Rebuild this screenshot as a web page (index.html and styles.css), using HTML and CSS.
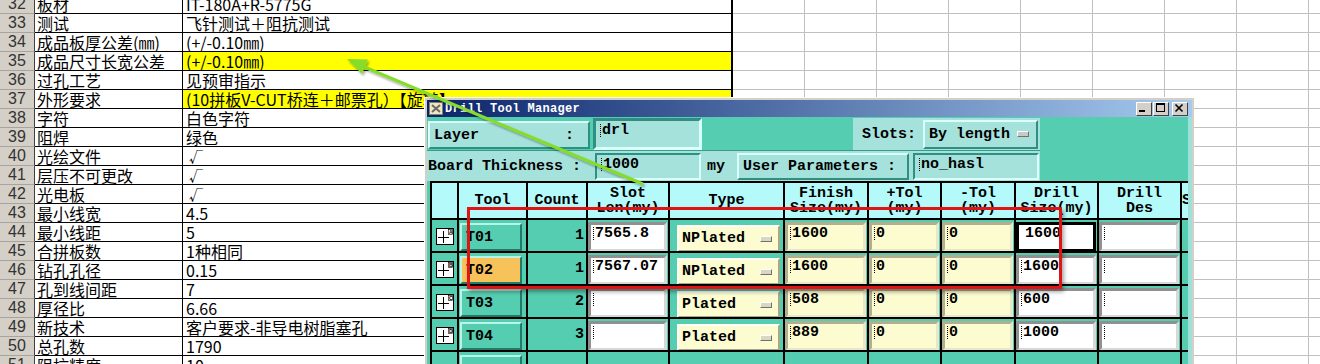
FILE: index.html
```html
<!DOCTYPE html>
<html lang="zh">
<head>
    <meta charset="UTF-8">
    <title>Drill Tool Manager</title>
    <link rel="stylesheet" href="styles.css">
</head>
<body>
    <div class="sheet">
        <div class="row"><div class="rh">32</div><div class="cb">板材</div><div class="cc">IT-180A+R-5775G</div><div class="gx"></div></div>
        <div class="row"><div class="rh">33</div><div class="cb">测试</div><div class="cc">飞针测试＋阻抗测试</div><div class="gx"></div></div>
        <div class="row"><div class="rh">34</div><div class="cb">成品板厚公差(㎜)</div><div class="cc">(+/-0.10㎜)</div><div class="gx"></div></div>
        <div class="row"><div class="rh">35</div><div class="cb">成品尺寸长宽公差</div><div class="cc hl">(+/-0.10㎜)</div><div class="gx"></div></div>
        <div class="row"><div class="rh">36</div><div class="cb">过孔工艺</div><div class="cc">见预审指示</div><div class="gx"></div></div>
        <div class="row"><div class="rh">37</div><div class="cb">外形要求</div><div class="cc hl">(10拼板V-CUT桥连＋邮票孔）【旋转】</div><div class="gx"></div></div>
        <div class="row"><div class="rh">38</div><div class="cb">字符</div><div class="cc">白色字符</div><div class="gx"></div></div>
        <div class="row"><div class="rh">39</div><div class="cb">阻焊</div><div class="cc">绿色</div><div class="gx"></div></div>
        <div class="row"><div class="rh">40</div><div class="cb">光绘文件</div><div class="cc chk">√</div><div class="gx"></div></div>
        <div class="row"><div class="rh">41</div><div class="cb">层压不可更改</div><div class="cc chk">√</div><div class="gx"></div></div>
        <div class="row"><div class="rh">42</div><div class="cb">光电板</div><div class="cc chk">√</div><div class="gx"></div></div>
        <div class="row"><div class="rh">43</div><div class="cb">最小线宽</div><div class="cc">4.5</div><div class="gx"></div></div>
        <div class="row"><div class="rh">44</div><div class="cb">最小线距</div><div class="cc">5</div><div class="gx"></div></div>
        <div class="row"><div class="rh">45</div><div class="cb">合拼板数</div><div class="cc">1种相同</div><div class="gx"></div></div>
        <div class="row"><div class="rh">46</div><div class="cb">钻孔孔径</div><div class="cc">0.15</div><div class="gx"></div></div>
        <div class="row"><div class="rh">47</div><div class="cb">孔到线间距</div><div class="cc">7</div><div class="gx"></div></div>
        <div class="row"><div class="rh">48</div><div class="cb">厚径比</div><div class="cc">6.66</div><div class="gx"></div></div>
        <div class="row"><div class="rh">49</div><div class="cb">新技术</div><div class="cc">客户要求-非导电树脂塞孔</div><div class="gx"></div></div>
        <div class="row"><div class="rh">50</div><div class="cb">总孔数</div><div class="cc">1790</div><div class="gx"></div></div>
        <div class="row"><div class="rh">51</div><div class="cb">阻抗精度</div><div class="cc">10</div><div class="gx"></div></div>
    </div>

    <div class="dlg">
        <div class="titlebar">
            <svg class="ticon" width="14" height="13" viewBox="0 0 14 13">
                <rect x="0.5" y="0.5" width="13" height="12" fill="#f0e8b8" stroke="#808080"/>
                <path d="M3 3L11 10M11 3L3 10" stroke="#6a6a6a" stroke-width="2"/>
            </svg>
            <span class="ttext">Drill Tool Manager</span>
            <div class="wbtns">
                <span class="wb"><svg width="14" height="12" viewBox="0 0 14 12"><rect x="3" y="8" width="6" height="2" fill="#000"/></svg></span>
                <span class="wb"><svg width="14" height="12" viewBox="0 0 14 12"><rect x="3.5" y="1.5" width="8" height="8" fill="none" stroke="#000"/><rect x="3" y="1" width="9" height="2" fill="#000"/></svg></span>
                <span class="wb wx"><svg width="14" height="12" viewBox="0 0 14 12"><path d="M3.5 2.5L10.5 9.5M10.5 2.5L3.5 9.5" stroke="#000" stroke-width="1.6"/></svg></span>
            </div>
        </div>
        <div class="dlg-body">
            <div class="r1">
                <div class="btn layer"><span>Layer</span><span>:</span></div>
                <div class="field drl"><span class="ib"></span>drl</div>
                <div class="slots">
                    <span class="slbl">Slots:</span>
                    <div class="btn opt">By length <i class="ind"></i></div>
                </div>
            </div>
            <div class="r2">
                <span class="blbl">Board Thickness :</span>
                <div class="field thick"><span class="ib"></span>1000</div>
                <span class="unit">my</span>
                <div class="btn upar">User Parameters :</div>
                <div class="field nohasl"><span class="ib"></span>no_hasl</div>
            </div>

            <div class="tbl">
                <div class="th"></div>
                <div class="th">Tool</div>
                <div class="th">Count</div>
                <div class="th">Slot<br>Len(my)</div>
                <div class="th">Type</div>
                <div class="th">Finish<br>Size(my)</div>
                <div class="th">+Tol<br>(my)</div>
                <div class="th">-Tol<br>(my)</div>
                <div class="th">Drill<br>Size(my)</div>
                <div class="th">Drill<br>Des</div>
                <div class="th th-s">S</div>

                <div class="td ic"><svg width="18" height="17" viewBox="0 0 18 17"><rect x="0.5" y="0.5" width="17" height="16" fill="#fff" stroke="#000"/><path d="M2 9.5H13M7.5 3V15" stroke="#000"/><rect x="12.5" y="1.5" width="4" height="5" fill="#fff" stroke="#000" stroke-width="0.6"/><text x="13" y="6" font-size="5" font-family="Liberation Sans">A</text></svg></div>
                <div class="td"><div class="btn tool">T01</div></div>
                <div class="td cnt">1</div>
                <div class="td"><div class="inp wht"><span class="ib"></span>7565.8</div></div>
                <div class="td"><div class="btn ytype">NPlated <i class="ind"></i></div></div>
                <div class="td"><div class="inp ylw"><span class="ib"></span>1600</div></div>
                <div class="td"><div class="inp ylw"><span class="ib"></span>0</div></div>
                <div class="td"><div class="inp ylw"><span class="ib"></span>0</div></div>
                <div class="td"><div class="inp wht focus">1600</div></div>
                <div class="td"><div class="inp wht"><span class="ib"></span></div></div>
                <div class="td"></div>

                <div class="td ic"><svg width="18" height="17" viewBox="0 0 18 17"><rect x="0.5" y="0.5" width="17" height="16" fill="#fff" stroke="#000"/><path d="M2 9.5H13M7.5 3V15" stroke="#000"/><rect x="12.5" y="1.5" width="4" height="5" fill="#fff" stroke="#000" stroke-width="0.6"/><text x="13" y="6" font-size="5" font-family="Liberation Sans">B</text></svg></div>
                <div class="td"><div class="btn tool sel">T02</div></div>
                <div class="td cnt">1</div>
                <div class="td"><div class="inp wht"><span class="ib"></span>7567.07</div></div>
                <div class="td"><div class="btn ytype">NPlated <i class="ind"></i></div></div>
                <div class="td"><div class="inp ylw"><span class="ib"></span>1600</div></div>
                <div class="td"><div class="inp ylw"><span class="ib"></span>0</div></div>
                <div class="td"><div class="inp ylw"><span class="ib"></span>0</div></div>
                <div class="td"><div class="inp wht"><span class="ib"></span>1600</div></div>
                <div class="td"><div class="inp wht"><span class="ib"></span></div></div>
                <div class="td"></div>

                <div class="td ic"><svg width="18" height="17" viewBox="0 0 18 17"><rect x="0.5" y="0.5" width="17" height="16" fill="#fff" stroke="#000"/><path d="M2 9.5H13M7.5 3V15" stroke="#000"/><rect x="12.5" y="1.5" width="4" height="5" fill="#fff" stroke="#000" stroke-width="0.6"/><text x="13" y="6" font-size="5" font-family="Liberation Sans">C</text></svg></div>
                <div class="td"><div class="btn tool">T03</div></div>
                <div class="td cnt">2</div>
                <div class="td"><div class="inp wht"><span class="ib"></span></div></div>
                <div class="td"><div class="btn ytype">Plated <i class="ind"></i></div></div>
                <div class="td"><div class="inp ylw"><span class="ib"></span>508</div></div>
                <div class="td"><div class="inp ylw"><span class="ib"></span>0</div></div>
                <div class="td"><div class="inp ylw"><span class="ib"></span>0</div></div>
                <div class="td"><div class="inp wht"><span class="ib"></span>600</div></div>
                <div class="td"><div class="inp wht"><span class="ib"></span></div></div>
                <div class="td"></div>

                <div class="td ic"><svg width="18" height="17" viewBox="0 0 18 17"><rect x="0.5" y="0.5" width="17" height="16" fill="#fff" stroke="#000"/><path d="M2 9.5H13M7.5 3V15" stroke="#000"/><rect x="12.5" y="1.5" width="4" height="5" fill="#fff" stroke="#000" stroke-width="0.6"/><text x="13" y="6" font-size="5" font-family="Liberation Sans">D</text></svg></div>
                <div class="td"><div class="btn tool">T04</div></div>
                <div class="td cnt">3</div>
                <div class="td"><div class="inp wht"><span class="ib"></span></div></div>
                <div class="td"><div class="btn ytype">Plated <i class="ind"></i></div></div>
                <div class="td"><div class="inp ylw"><span class="ib"></span>889</div></div>
                <div class="td"><div class="inp ylw"><span class="ib"></span>0</div></div>
                <div class="td"><div class="inp ylw"><span class="ib"></span>0</div></div>
                <div class="td"><div class="inp wht"><span class="ib"></span>1000</div></div>
                <div class="td"><div class="inp wht"><span class="ib"></span></div></div>
                <div class="td"></div>

                <div class="td"></div>
                <div class="td"><div class="btn tool"></div></div>
                <div class="td"></div>
                <div class="td"></div>
                <div class="td"></div>
                <div class="td"></div>
                <div class="td"></div>
                <div class="td"></div>
                <div class="td"></div>
                <div class="td"></div>
                <div class="td"></div>
            </div>
        </div>
    </div>

    <!-- annotations drawn over the screenshot -->
    <div class="redbox"></div>
    <svg class="arrow" width="1320" height="364" viewBox="0 0 1320 364">
        <defs>
            <filter id="sh" x="-10%" y="-10%" width="120%" height="130%">
                <feDropShadow dx="1.5" dy="2" stdDeviation="1.2" flood-color="#000" flood-opacity="0.35"/>
            </filter>
        </defs>
        <g filter="url(#sh)">
            <line x1="643" y1="184" x2="362" y2="66" stroke="#86dc2c" stroke-width="3"/>
            <polygon points="347,59 368,59.5 362,74" fill="#86dc2c"/>
        </g>
    </svg>
</body>
</html>
```

FILE: styles.css
```css
body {
    margin: 0;
    width: 1320px;
    height: 364px;
    overflow: hidden;
    position: relative;
    background: #fff;
}

/* spreadsheet behind the dialog */
.sheet {
    margin-top: -5px;
    height: 369px;
    overflow: hidden;
}

.row {
    display: grid;
    grid-template-columns: 35px 148px 550px 1fr;
    height: 19px;
}

.row > div {
    box-sizing: border-box;
    white-space: nowrap;
    overflow: hidden;
    line-height: 18px;
    font-size: 16px;
    font-family: "Noto Sans CJK SC", sans-serif;
    color: #000;
    border-bottom: 1px solid #000;
}

.row .rh {
    background: #d4d0c8;
    border-right: 1px solid #404040;
    border-bottom-color: #a8a49c;
    text-align: center;
    font-family: "Liberation Sans", sans-serif;
    color: #333;
}

.row .cb {
    padding-left: 2px;
    border-right: 1px solid #000;
}

.row .cc {
    padding-left: 3px;
    border-right: 2px solid #000;
}

.row .cc.hl {
    background: #ffff00;
}

.row .cc.chk {
    padding-left: 6px;
    font-size: 14px;
}

.row .gx {
    border-bottom-color: #c0c0c0;
    background: repeating-linear-gradient(90deg, transparent 0 71px, #c0c0c0 71px 72px);
}

/* dialog window */
.dlg {
    position: absolute;
    left: 424px;
    top: 97px;
    width: 770px;
    height: 267px;
    overflow: hidden;
    box-sizing: border-box;
    padding: 3px 2px 0 3px;
    background: #d4d0c8;
    box-shadow: inset 1px 1px #fff;
    font-family: "Liberation Mono", monospace;
    font-weight: bold;
    font-size: 15px;
    color: #000;
}

.titlebar {
    height: 17px;
    display: flex;
    align-items: center;
    background: linear-gradient(90deg, #0a246a, #a6caf0);
    color: #fff;
    font-size: 12px;
}

.ticon {
    margin-left: 2px;
}

.ttext {
    margin-left: 2px;
    letter-spacing: 0.3px;
}

.wbtns {
    margin-left: auto;
    margin-right: 4px;
    display: flex;
    gap: 1px;
}

.wb {
    display: block;
    width: 14px;
    height: 12px;
    background: #d4d0c8;
    border: 1px solid;
    border-color: #fff #404040 #404040 #fff;
}

.wb svg {
    display: block;
    margin: -1px 0 0 -1px;
}

.wx {
    margin-left: 2px;
}

.dlg-body {
    background: #55cdb0;
    height: 247px;
    overflow: hidden;
    border-right: 4px solid #9fe0d8;
    padding-top: 1px;
    box-sizing: border-box;
}

.btn {
    box-sizing: border-box;
    background: #a6e2dc;
    border: 2px solid;
    border-color: #d8fffa #2f8f80 #2f8f80 #d8fffa;
    display: flex;
    align-items: center;
    white-space: nowrap;
}

.field {
    box-sizing: border-box;
    background: #a6e2dc;
    border: 2px solid;
    border-color: #2f8f80 #d8fffa #d8fffa #2f8f80;
    display: flex;
    align-items: flex-start;
    padding: 1px 0 0 2px;
}

.ib {
    display: inline-block;
    width: 0;
    height: 13px;
    border-left: 1px dotted #000;
    margin: 2px 1px 0 2px;
    flex: none;
}

.r1 {
    display: flex;
    height: 32px;
}

.btn.layer {
    width: 162px;
    height: 28px;
    margin: 3px 0 0 1px;
    justify-content: space-between;
    padding: 0 14px 0 4px;
}

.field.drl {
    width: 109px;
    height: 32px;
    margin-left: 3px;
    border-width: 3px;
}

.slots {
    margin-left: 151px;
    width: 187px;
    background: #a6e2dc;
    display: flex;
    align-items: center;
}

.slbl {
    margin-left: 9px;
    width: 61px;
}

.btn.opt {
    width: 115px;
    height: 29px;
    padding-left: 4px;
}

.ind {
    display: inline-block;
    width: 10px;
    height: 4px;
    background: #c8c8c8;
    border: 1px solid;
    border-color: #fff #707070 #707070 #fff;
    margin-left: 7px;
}

.r2 {
    display: flex;
    align-items: center;
    width: 613px;
    height: 31px;
    background: #a6e2dc;
    border-top: 1px solid #3a9c88;
    box-sizing: border-box;
}

.blbl {
    width: 167px;
    padding-left: 1px;
}

.field.thick {
    width: 106px;
    height: 27px;
}

.unit {
    width: 36px;
    padding-left: 6px;
    box-sizing: border-box;
}

.btn.upar {
    width: 172px;
    height: 27px;
    padding-left: 4px;
}

.field.nohasl {
    width: 126px;
    height: 27px;
    margin-left: 4px;
}

/* tool table */
.tbl {
    margin-left: 3px;
    width: 758px;
    box-sizing: border-box;
    display: grid;
    grid-template-columns: 25px 67px 58px 80px 113px 82px 71px 72px 81px 81px 6px;
    grid-template-rows: 35px repeat(5, 31px);
    gap: 2px;
    padding: 2px 0 0 2px;
    background: #000;
}

.th {
    background: #b4fafa;
    display: flex;
    align-items: center;
    justify-content: center;
    text-align: center;
    line-height: 15px;
    overflow: hidden;
}

.th-s {
    justify-content: flex-start;
}

.td {
    background: #55cdb0;
    overflow: hidden;
}

.td.ic {
    display: flex;
    align-items: center;
    justify-content: center;
}

.td.ic svg {
    margin-top: 1px;
}

.td.cnt {
    display: flex;
    align-items: center;
    justify-content: flex-end;
    padding-right: 2px;
}

.btn.tool {
    width: 62px;
    height: 28px;
    margin: 3px 0 0 1px;
    background: #55cdb0;
    border-color: #b8f4e8 #237a68 #237a68 #b8f4e8;
    padding-left: 4px;
}

.btn.tool.sel {
    background: #f8c25a;
}

.btn.ytype {
    width: 103px;
    height: 27px;
    margin: 5px 0 0 7px;
    background: #fcfcd0;
    border-color: #fffff4 #a8a888 #a8a888 #fffff4;
    padding-left: 3px;
}

.btn.ytype .ind {
    margin-left: auto;
    margin-right: 6px;
    background: #d8d8c0;
}

.inp {
    box-sizing: border-box;
    height: 30px;
    margin-top: 2px;
    width: calc(100% - 1px);
    border: 3px solid;
    display: flex;
    align-items: flex-start;
    white-space: nowrap;
    line-height: 17px;
}

.inp.wht {
    background: #fff;
    border-color: #909090 #d8d8d8 #d8d8d8 #909090;
}

.inp.ylw {
    background: #fcfcd0;
    border-color: #b0b090 #e8e8c8 #e8e8c8 #b0b090;
}

.inp.focus {
    border-color: #000;
    padding-left: 6px;
}

/* annotations */
.redbox {
    position: absolute;
    left: 467px;
    top: 207px;
    width: 595px;
    height: 82px;
    box-sizing: border-box;
    border: 3px solid #e01414;
    box-shadow: 2px 3px 4px rgba(0, 0, 0, 0.35);
}

.arrow {
    position: absolute;
    left: 0;
    top: 0;
    pointer-events: none;
}
```
